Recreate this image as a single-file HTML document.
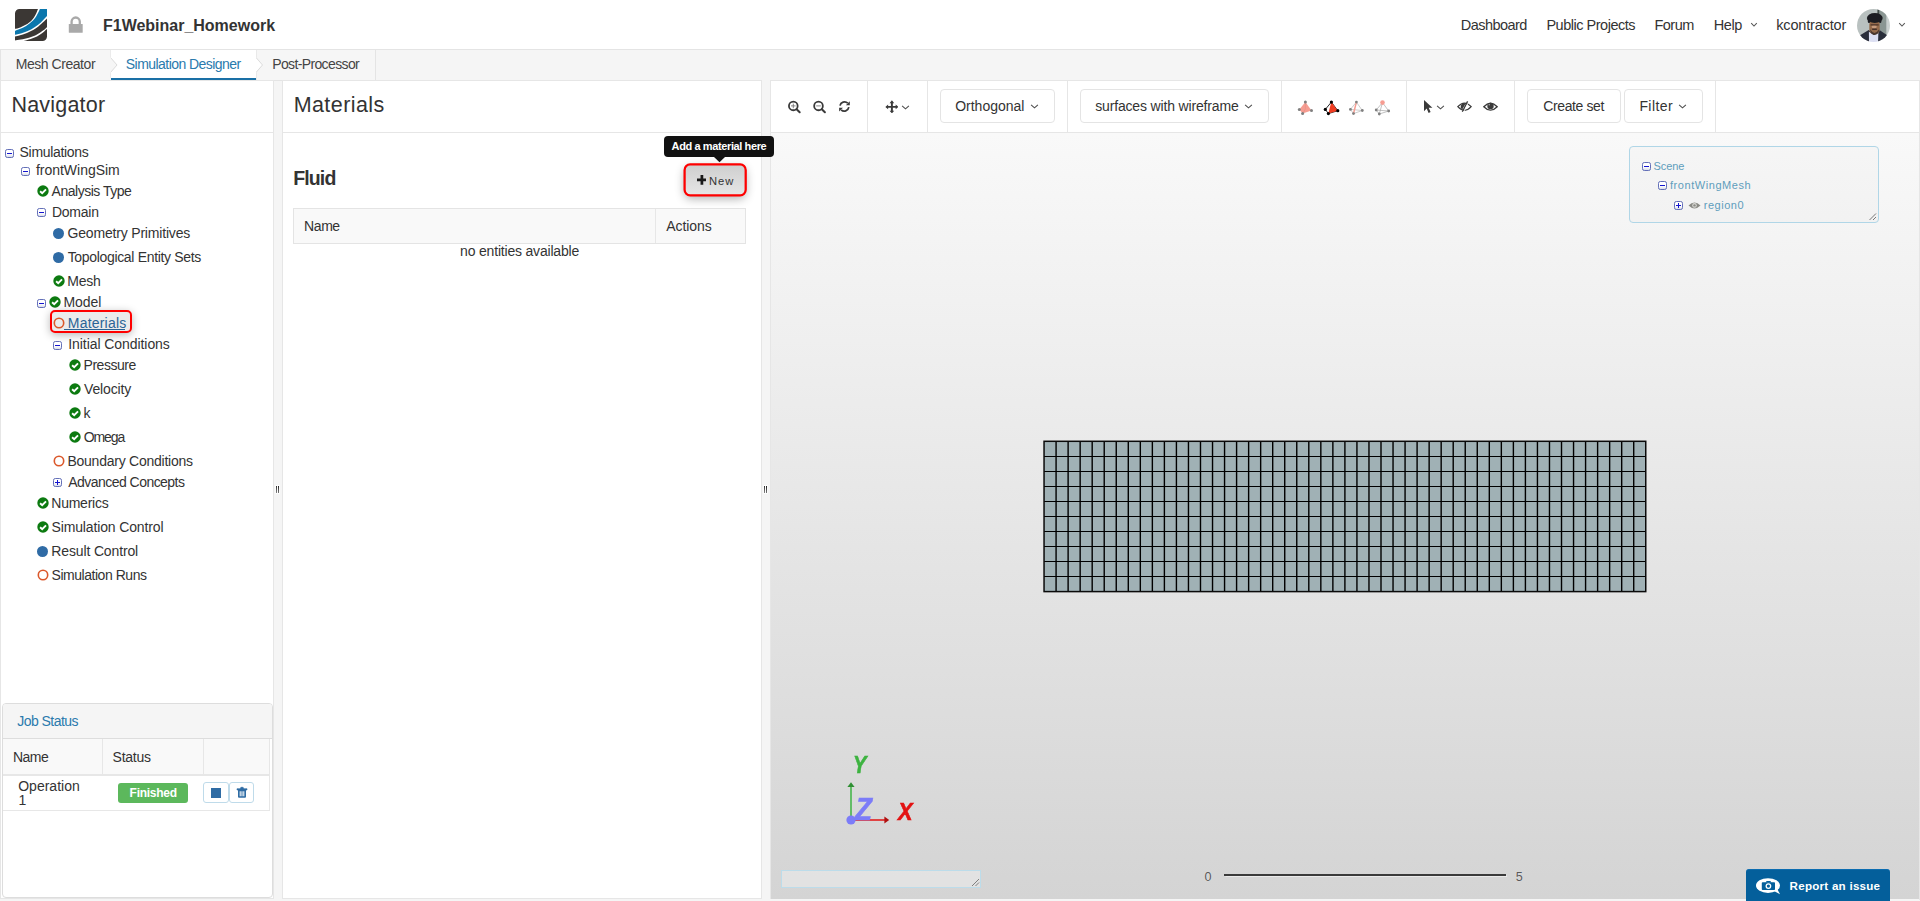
<!DOCTYPE html>
<html lang="en"><head><meta charset="utf-8"><title>F1Webinar_Homework</title>
<style>
*{box-sizing:border-box;margin:0;padding:0}
html,body{width:1920px;height:901px;overflow:hidden;background:#f5f5f5;font-family:"Liberation Sans",sans-serif;color:#333}
.t{position:absolute;white-space:pre;font-family:"Liberation Sans",sans-serif;z-index:5}
.a{position:absolute}
#hdr{left:0;top:0;width:1920px;height:50px;background:#fff;border-bottom:1px solid #e4e4e4}
#tabs{left:0;top:50px;width:376px;height:31px;background:#f6f6f6;border-left:1px solid #e4e4e4;border-right:1px solid #e4e4e4;border-bottom:1px solid #e4e4e4}
#tabact{left:111px;top:50px;width:145px;height:30px;background:#fff;border-bottom:2px solid #1a70a6}
.panel{background:#fff;border:1px solid #e6e6e6}
#nav{left:0;top:80px;width:274px;height:819px}
#mat{left:282px;top:80px;width:480px;height:819px}
#view{left:770px;top:80px;width:1150px;height:819px;border:0;border-left:1px solid #e6e6e6;border-top:1px solid #e6e6e6;background:linear-gradient(#f9f9f9 0,#f9f9f9 53px,#d4d4d4 100%)}
#tbar{left:771px;top:81px;width:1149px;height:52px;background:#fff;border-bottom:1px solid #e6e6e6}
.hline{height:1px;background:#e6e6e6}
.vsep{width:1px;top:81px;height:51px;background:#e6e6e6}
.btn{border:1px solid #e4e4e4;border-radius:4px;background:#fff}

</style></head>
<body>
<div class="a" id="hdr"></div>
<div class="a" id="tabs"></div>
<div class="a" id="tabact"></div>
<div class="a panel" id="nav"></div>
<div class="a hline" style="left:1px;top:132px;width:272px"></div>
<div class="a panel" id="mat"></div>
<div class="a hline" style="left:283px;top:132px;width:478px"></div>
<div class="a" id="view"></div>
<div class="a" id="tbar"></div>
<div class="a" style="left:1919px;top:80px;width:1px;height:820px;background:#e6e6e6"></div>
<svg width="0" height="0" style="position:absolute">
<defs>
<linearGradient id="g-box" x1="0" y1="0" x2="0" y2="1"><stop offset="0" stop-color="#fff"/><stop offset=".55" stop-color="#fff"/><stop offset="1" stop-color="#d4d8e4"/></linearGradient>
</defs></svg>
<!-- logo -->
<svg class="a" style="left:15px;top:9px" width="32" height="32" viewBox="0 0 32 32">
<defs><clipPath id="lg"><path d="M4.5 0H32V27.5a4.5 4.5 0 0 1-4.5 4.5H0V4.5A4.5 4.5 0 0 1 4.5 0Z"/></clipPath></defs>
<g clip-path="url(#lg)"><rect width="32" height="32" fill="#3b3734"/><path d="M23 0C22.57 1.00 21.43 4.13 20.40 6.00C19.37 7.87 18.33 9.60 16.80 11.20C15.27 12.80 13.13 14.40 11.20 15.60C9.27 16.80 7.07 17.70 5.20 18.40C3.33 19.10 0.87 19.57 0.00 19.80L0 27.4C1.00 27.17 3.67 26.73 6.00 26.00C8.33 25.27 11.33 24.27 14.00 23.00C16.67 21.73 19.67 20.03 22.00 18.40C24.33 16.77 26.33 14.70 28.00 13.20C29.67 11.70 31.33 10.03 32.00 9.40L32 0Z" fill="#fff"/><path d="M24.9 0C24.37 1.08 22.90 4.53 21.70 6.50C20.50 8.47 19.47 10.07 17.70 11.80C15.93 13.53 13.25 15.52 11.10 16.90C8.95 18.28 6.65 19.27 4.80 20.10C2.95 20.93 0.80 21.60 0.00 21.90L0 25.8C1.33 25.47 5.33 24.70 8.00 23.80C10.67 22.90 13.53 21.70 16.00 20.40C18.47 19.10 20.80 17.53 22.80 16.00C24.80 14.47 26.47 12.70 28.00 11.20C29.53 9.70 31.33 7.70 32.00 7.00L32 0Z" fill="#0b77ad"/><path d="M32 18.2C31.33 18.77 29.67 20.37 28.00 21.60C26.33 22.83 24.33 24.40 22.00 25.60C19.67 26.80 16.67 27.97 14.00 28.80C11.33 29.63 8.33 30.15 6.00 30.60C3.67 31.05 1.00 31.35 0.00 31.50L0 32L8.4 32C9.60 31.65 13.33 30.67 15.60 29.90C17.87 29.13 19.93 28.47 22.00 27.40C24.07 26.33 26.33 24.77 28.00 23.50C29.67 22.23 31.33 20.42 32.00 19.80Z" fill="#fff"/></g></svg>
<!-- lock -->
<svg class="a" style="left:68px;top:15px" width="16" height="19" viewBox="0 0 16 19">
<path d="M3.6 10V6.6a4.1 4.1 0 0 1 8.2 0V10" fill="none" stroke="#a9a9a9" stroke-width="2.3"/>
<rect x=".8" y="9" width="13.9" height="8.8" rx=".6" fill="#a9a9a9"/></svg>
<!-- avatar -->
<svg class="a" style="left:1857px;top:9px" width="33" height="33" viewBox="0 0 33 33">
<defs><clipPath id="av"><circle cx="16.5" cy="16.5" r="16.5"/></clipPath><filter id="avb" x="-10%" y="-10%" width="120%" height="120%"><feGaussianBlur stdDeviation=".6"/></filter></defs>
<g clip-path="url(#av)"><g filter="url(#avb)">
<rect x="-2" y="-2" width="37" height="37" fill="#b9c1c0"/>
<rect x="21" y="-2" width="8.5" height="37" fill="#8a9693"/>
<rect x="20.4" y="-2" width="1.8" height="12" fill="#414947"/>
<rect x="29.5" y="-2" width="6" height="37" fill="#c9d0cf"/>
<path d="M1 27.5 L11.7 21 L16.5 24 L22.8 21.3 L32 27.5 V35 H1 Z" fill="#2a2d3a"/>
<path d="M11.9 22.8 L16.8 26 L21.4 23 L21 35 H12 Z" fill="#dcdff2"/>
<rect x="12.3" y="11" width="10.4" height="14.3" rx="4.6" fill="#946a4b"/>
<ellipse cx="17.2" cy="17.8" rx="2.6" ry="1.7" fill="#c79b7d"/>
<rect x="13.4" y="15.2" width="8.4" height="1.3" rx=".6" fill="#4b3528"/>
<path d="M13 20.3 Q17.4 27.5 22.3 20.3 Q21.5 25.8 17.5 26 Q13.8 25.8 13 20.3Z" fill="#4a372e"/>
<rect x="15" y="19.6" width="5" height="1.4" rx=".7" fill="#45302a"/>
<ellipse cx="17.8" cy="9" rx="7.9" ry="5.1" fill="#1e1e22"/>
<rect x="10.8" y="9" width="2.4" height="5" rx="1.2" fill="#1e1e22"/><rect x="22" y="9" width="2.4" height="5" rx="1.2" fill="#1e1e22"/>
</g></g></svg>
<!-- chevrons header -->
<svg class="a" style="left:1750px;top:22.3px" width="8" height="6" viewBox="0 0 8 6"><path d="M1.2 1.2 L4 4 L6.8 1.2" fill="none" stroke="#555" stroke-width="1.05"/></svg>
<svg class="a" style="left:1898px;top:22.3px" width="8" height="6" viewBox="0 0 8 6"><path d="M1.2 1.2 L4 4 L6.8 1.2" fill="none" stroke="#555" stroke-width="1.05"/></svg>
<!-- tab arrows -->
<svg class="a" style="left:108px;top:50px" width="12" height="30" viewBox="0 0 12 30"><path d="M2.5 0 V7.5 L9 15 L2.5 22.5 V28" fill="#f6f6f6" stroke="#dcdcdc" stroke-width="1"/><rect x="0" y="0" width="2.6" height="28" fill="#f6f6f6"/></svg>
<svg class="a" style="left:253px;top:50px" width="12" height="30" viewBox="0 0 12 30"><path d="M3 0 V7.5 L9.5 15 L3 22.5 V30" fill="#fff" stroke="#dcdcdc" stroke-width="1"/><rect x="0" y="0" width="3" height="28" fill="#fff"/><rect x="0" y="28" width="3" height="2" fill="#1a70a6"/></svg>
<!-- job status -->
<div class="a" style="left:2px;top:703px;width:271px;height:195px;background:#fff;border:1px solid #ddd;border-radius:4px"></div>
<div class="a" style="left:3px;top:704px;width:269px;height:35px;background:#f5f5f5;border-bottom:1px solid #ddd;border-radius:3px 3px 0 0"></div>
<div class="a" style="left:3px;top:739px;width:267px;height:37px;background:#f9f9f9;border-bottom:2px solid #e7e7e7"></div>
<div class="a" style="left:102px;top:739px;width:1px;height:36px;background:#e7e7e7"></div>
<div class="a" style="left:203px;top:739px;width:1px;height:36px;background:#e7e7e7"></div>
<div class="a" style="left:269px;top:739px;width:1px;height:72px;background:#e7e7e7"></div>
<div class="a" style="left:3px;top:810px;width:267px;height:1px;background:#e7e7e7"></div>
<div class="a" style="left:118px;top:783px;width:70px;height:20px;background:#5cb85c;border-radius:3px"></div>
<div class="a" style="left:203px;top:782px;width:26px;height:21px;border:1px solid #bfdbea;border-radius:3px;background:#fff"></div>
<div class="a" style="left:211px;top:788px;width:10px;height:10px;background:#2f6ca4"></div>
<div class="a" style="left:229px;top:782px;width:25px;height:21px;border:1px solid #bfdbea;border-radius:3px;background:#fff"></div>
<svg class="a" style="left:236px;top:786px" width="12" height="13" viewBox="0 0 12 13"><path d="M1 2.7H11V4H1Z M4.3 2.7 L4.9 1.3 H7.1 L7.7 2.7" fill="#2f6ca4" stroke="#2f6ca4" stroke-width=".6"/><path d="M2 4H10V10.8a1 1 0 0 1-1 1H3a1 1 0 0 1-1-1Z M3.7 5.2V10.3H4.7V5.2Z M5.5 5.2V10.3H6.5V5.2Z M7.3 5.2V10.3H8.3V5.2Z" fill="#2f6ca4" fill-rule="evenodd"/></svg>
<!-- splitter handles -->
<div class="a" style="left:276px;top:486px;width:1px;height:7px;background:linear-gradient(#222,#777);box-shadow:0 0 1px 1px rgba(255,255,255,.8)"></div><div class="a" style="left:278px;top:486px;width:1px;height:7px;background:linear-gradient(#222,#777);box-shadow:0 0 1px 1px rgba(255,255,255,.8)"></div><div class="a" style="left:764px;top:486px;width:1px;height:7px;background:linear-gradient(#222,#777);box-shadow:0 0 1px 1px rgba(255,255,255,.8)"></div><div class="a" style="left:766px;top:486px;width:1px;height:7px;background:linear-gradient(#222,#777);box-shadow:0 0 1px 1px rgba(255,255,255,.8)"></div>
<!-- materials -->
<div class="a" style="left:293px;top:208px;width:453px;height:36px;background:#f9f9f9;border:1px solid #e4e4e4"></div>
<div class="a" style="left:655px;top:209px;width:1px;height:34px;background:#e7e7e7"></div>
<div class="a" style="left:685px;top:165px;width:60px;height:30px;border-radius:6px;box-shadow:0 3px 10px 1px rgba(0,0,0,.3)"></div><svg class="a" style="left:682px;top:162px" width="67" height="36" viewBox="682 162 67 36"><defs><linearGradient id="g-new" x1="0" y1="0" x2="0" y2="1"><stop offset="0" stop-color="#cecece"/><stop offset="1" stop-color="#e6e6e6"/></linearGradient></defs><rect x="684.6" y="164.4" width="61.1" height="30.9" rx="5.5" fill="url(#g-new)" stroke="#fe0000" stroke-width="2.25"/></svg>
<svg class="a" style="left:696.7px;top:175.2px" width="9.8" height="9.8" viewBox="0 0 10 10"><path d="M3.6 0H6.4V3.7H10V6.3H6.4V10H3.6V6.3H0V3.7H3.6Z" fill="#1a1a1a"/></svg>
<div class="a" style="left:664px;top:136px;width:110px;height:21px;background:#111;border-radius:4px;z-index:8"></div>
<svg class="a" style="left:714px;top:157px;z-index:8" width="11" height="6" viewBox="0 0 11 6"><path d="M0 0H11L5.5 5.2Z" fill="#111"/></svg>
<!-- toolbar -->
<div class="a vsep" style="left:867px"></div><div class="a vsep" style="left:927px"></div><div class="a vsep" style="left:1067px"></div><div class="a vsep" style="left:1281px"></div><div class="a vsep" style="left:1406px"></div><div class="a vsep" style="left:1514px"></div><div class="a vsep" style="left:1715px"></div>
<div class="a btn" style="left:940px;top:89px;width:115px;height:34px"></div>
<div class="a btn" style="left:1080px;top:89px;width:189px;height:34px"></div>
<div class="a btn" style="left:1527px;top:89px;width:94px;height:34px"></div>
<div class="a btn" style="left:1624px;top:89px;width:79px;height:34px"></div>
<svg class="a" style="left:1030px;top:103px" width="9" height="7" viewBox="0 0 9 7"><path d="M1.1 1.8 L4.5 4.8 L7.9 1.8" fill="none" stroke="#4a4a4a" stroke-width="1.05"/></svg>
<svg class="a" style="left:1244px;top:103px" width="9" height="7" viewBox="0 0 9 7"><path d="M1.1 1.8 L4.5 4.8 L7.9 1.8" fill="none" stroke="#4a4a4a" stroke-width="1.05"/></svg>
<svg class="a" style="left:1678px;top:103px" width="9" height="7" viewBox="0 0 9 7"><path d="M1.1 1.8 L4.5 4.8 L7.9 1.8" fill="none" stroke="#4a4a4a" stroke-width="1.05"/></svg>
<svg class="a" style="left:901px;top:103.5px" width="9" height="7" viewBox="0 0 9 7"><path d="M1.1 1.8 L4.5 4.8 L7.9 1.8" fill="none" stroke="#4a4a4a" stroke-width="1.05"/></svg>
<svg class="a" style="left:1436px;top:103.5px" width="9" height="7" viewBox="0 0 9 7"><path d="M1.1 1.8 L4.5 4.8 L7.9 1.8" fill="none" stroke="#4a4a4a" stroke-width="1.05"/></svg>
<!-- zoom in / out / refresh / move -->
<svg class="a" style="left:786px;top:99px" width="16" height="16" viewBox="0 0 16 16"><circle cx="7.3" cy="6.9" r="4.35" fill="none" stroke="#3a3a3a" stroke-width="1.8"/><path d="M10.6 10.2 L13.7 13.3" stroke="#3a3a3a" stroke-width="2" stroke-linecap="round"/><path d="M5 6.9H9.6M7.3 4.6V9.2" stroke="#777" stroke-width=".9"/></svg>
<svg class="a" style="left:811px;top:99px" width="16" height="16" viewBox="0 0 16 16"><circle cx="7.5" cy="6.9" r="4.35" fill="none" stroke="#3a3a3a" stroke-width="1.8"/><path d="M10.8 10.2 L13.9 13.3" stroke="#3a3a3a" stroke-width="2" stroke-linecap="round"/><path d="M5.2 6.9H9.8" stroke="#777" stroke-width=".9"/></svg>
<svg class="a" style="left:837.7px;top:100px" width="12.9" height="12.9" viewBox="0 0 14 14"><path d="M2.2 6.2A5 5 0 0 1 10.6 3.4" fill="none" stroke="#3a3a3a" stroke-width="1.9"/><path d="M12.8 1.4V5.6H8.6Z" fill="#3a3a3a"/><path d="M11.8 7.8A5 5 0 0 1 3.4 10.6" fill="none" stroke="#3a3a3a" stroke-width="1.9"/><path d="M1.2 12.6V8.4H5.4Z" fill="#3a3a3a"/></svg>
<svg class="a" style="left:884.6px;top:99.6px" width="13.8" height="13.8" viewBox="0 0 15 15"><path d="M7.5 2V13M2 7.5H13" stroke="#3a3a3a" stroke-width="2.1"/><path d="M7.5 .4L10 3.4H5Z M7.5 14.6L10 11.6H5Z M.4 7.5L3.4 5V10Z M14.6 7.5L11.6 5V10Z" fill="#3a3a3a"/></svg>
<!-- tetra icons -->
<svg class="a" style="left:1296px;top:98px" width="96" height="19" viewBox="1296 98 96 19">
<g><path d="M1305.4 102.1 L1299.3 109.4 L1302.6 113.6 L1311.5 110.5Z" fill="#f69d92"/><path d="M1305.4 102.1V109 L1302.6 113.6" fill="none" stroke="#e08a80" stroke-width=".5"/>
<g fill="#808080"><circle cx="1305.4" cy="102.1" r="1.5"/><circle cx="1299.3" cy="109.4" r="1.5"/><circle cx="1302.6" cy="113.6" r="1.5"/><circle cx="1311.5" cy="110.5" r="1.5"/></g></g>
<g><path d="M1331.4 102.1 L1325.3 109.4 L1328.4 113.6 L1337.8 110.7Z" fill="#fff" stroke="#111" stroke-width=".9"/><path d="M1331.4 102.1 L1337.8 110.7 L1328.4 113.6 L1330 107Z" fill="#f03c20"/>
<g fill="#000"><circle cx="1331.4" cy="102.1" r="1.6"/><circle cx="1325.3" cy="109.4" r="1.6"/><circle cx="1328.4" cy="113.6" r="1.6"/><circle cx="1337.8" cy="110.7" r="1.6"/></g></g>
<g><path d="M1356.4 102.1 L1350.4 109.4 L1353.5 113.6 L1362.3 110.5Z M1350.4 109.4 L1362.3 110.5" fill="none" stroke="#aaa" stroke-width=".6"/><path d="M1356.4 102.1 L1353.5 113.6" stroke="#f69d92" stroke-width="1.5"/>
<g fill="#808080"><circle cx="1356.4" cy="102.1" r="1.4"/><circle cx="1350.4" cy="109.4" r="1.4"/><circle cx="1353.5" cy="113.6" r="1.4"/><circle cx="1362.3" cy="110.5" r="1.4"/></g></g>
<g><path d="M1382.5 102.6 L1376.2 110 L1379.3 114 L1388.7 111Z M1376.2 110 L1388.7 111 M1382.5 102.6 L1379.3 114" fill="none" stroke="#999" stroke-width=".6"/>
<circle cx="1382.5" cy="102.6" r="2.3" fill="#f69d92"/>
<g fill="#808080"><circle cx="1376.2" cy="110" r="1.4"/><circle cx="1379.3" cy="114" r="1.4"/><circle cx="1388.7" cy="111" r="1.4"/></g></g>
</svg>
<!-- cursor, eye-slash, eye -->
<svg class="a" style="left:1423px;top:99px" width="11" height="15" viewBox="0 0 11 15"><path d="M1 1V12.2L3.7 9.6L5.6 13.9L7.6 13L5.7 8.8H9.4Z" fill="#3a3a3a"/></svg>
<svg class="a" style="left:1457px;top:101px" width="15" height="12" viewBox="0 0 15 12"><path d="M.8 5.7Q7.5-1.6 14.2 5.7Q7.5 13 .8 5.7Z" fill="none" stroke="#3a3a3a" stroke-width="1.2"/><path d="M7.4 2.2A3.5 3.5 0 0 0 5.2 8.6L8.6 2.4Z" fill="#3a3a3a"/><path d="M10.6 .4 L5.4 10.8" stroke="#3a3a3a" stroke-width="1.4"/><path d="M10.6 .4 L5.4 10.8" stroke="#fff" stroke-width=".8" transform="translate(1.2 .3)"/></svg>
<svg class="a" style="left:1483px;top:101px" width="15" height="12" viewBox="0 0 15 12"><path d="M.8 5.7Q7.5-1.2 14.2 5.7Q7.5 12.6 .8 5.7Z" fill="none" stroke="#3a3a3a" stroke-width="1.3"/><circle cx="7.5" cy="4.9" r="3.2" fill="#3a3a3a"/><circle cx="6.2" cy="3.8" r=".7" fill="#bbb"/></svg>
<!-- scene box -->
<div class="a" style="left:1629px;top:146px;width:250px;height:77px;border:1px solid #b0d6e7;border-radius:4px;background:rgba(0,0,0,.012)"></div>
<svg class="a" style="left:1868px;top:212px" width="9" height="9" viewBox="0 0 9 9"><path d="M1.5 8L8 1.5M5 8L8 5" stroke="#555" stroke-width=".8"/></svg>
<svg class="a" style="left:1688px;top:201px" width="13" height="9" viewBox="0 0 13 9"><path d="M.5 4.5Q6.5-1.3 12.5 4.5Q6.5 10.3 .5 4.5Z" fill="#8a8a84"/><circle cx="6.5" cy="4.4" r="2.3" fill="#d8d8d4"/><circle cx="6.5" cy="4.4" r="1.2" fill="#8a8a84"/></svg>
<!-- axes -->
<svg class="a" style="left:840px;top:778px" width="56" height="52" viewBox="840 778 56 52">
<path d="M851 820V786" stroke="#3db340" stroke-width="1.5"/><path d="M851 782.2L854.6 787H847.4Z" fill="#2f8f33"/>
<path d="M851 820H885" stroke="#e31212" stroke-width="1.5"/><path d="M889.2 820L884.4 823.6V816.4Z" fill="#b01010"/>
<circle cx="851" cy="820" r="4.6" fill="#7c7cf8"/></svg>
<!-- bottom textarea -->
<div class="a" style="left:781px;top:870px;width:200px;height:18px;border:1px solid #bcdcea;background:rgba(255,255,255,.32)"></div>
<svg class="a" style="left:971px;top:878px" width="9" height="9" viewBox="0 0 9 9"><path d="M1 8L8 1M4.5 8L8 4.5" stroke="#666" stroke-width=".8"/></svg>
<!-- scale bar -->
<div class="a" style="left:1224px;top:874px;width:282px;height:2px;background:#3a3a3a;box-shadow:0 0 1px 0.5px rgba(255,255,255,.5)"></div>
<!-- report -->
<div class="a" style="left:1746px;top:869px;width:144px;height:33px;background:#045f9b;border-radius:3px 3px 0 0;border-top:1px solid #0b6cb0"></div>
<svg class="a" style="left:1754px;top:876px" width="28" height="20" viewBox="1754 876 28 20"><ellipse cx="1768" cy="885.6" rx="12" ry="7.4" fill="#fff"/><path d="M1773 890.5L1780 894.2L1776.5 887.5Z" fill="#fff"/><rect x="1761.8" y="882.3" width="13.2" height="7.8" rx=".8" fill="#045f9b"/><path d="M1765.6 882.6L1766.6 880.9H1770.4L1771.4 882.6Z" fill="#045f9b"/><circle cx="1768.4" cy="886.1" r="2.9" fill="#fff"/><circle cx="1768.4" cy="886.1" r="1.6" fill="#045f9b"/></svg>
<svg class="a" style="left:5px;top:149px" width="9" height="9" viewBox="0 0 9 9"><rect x=".5" y=".5" width="8" height="8" rx="1.8" fill="url(#g-box)" stroke="#6470b8"/><rect x="2" y="4" width="5" height="1" fill="#1515d0"/></svg>
<svg class="a" style="left:21px;top:167px" width="9" height="9" viewBox="0 0 9 9"><rect x=".5" y=".5" width="8" height="8" rx="1.8" fill="url(#g-box)" stroke="#6470b8"/><rect x="2" y="4" width="5" height="1" fill="#1515d0"/></svg>
<svg class="a" style="left:36.7px;top:185.3px" width="12" height="12" viewBox="0 0 12 12"><circle cx="6" cy="6" r="5.7" fill="#0c7a10"/><path d="M3.1 6.2 L5.2 8.2 L9 4.3" fill="none" stroke="#fff" stroke-width="1.9"/></svg>
<svg class="a" style="left:37px;top:208px" width="9" height="9" viewBox="0 0 9 9"><rect x=".5" y=".5" width="8" height="8" rx="1.8" fill="url(#g-box)" stroke="#6470b8"/><rect x="2" y="4" width="5" height="1" fill="#1515d0"/></svg>
<div class="a" style="left:53.0px;top:227.8px;width:11px;height:11px;border-radius:50%;background:#2f6ba5"></div>
<div class="a" style="left:53.0px;top:251.8px;width:11px;height:11px;border-radius:50%;background:#2f6ba5"></div>
<svg class="a" style="left:52.7px;top:275.3px" width="12" height="12" viewBox="0 0 12 12"><circle cx="6" cy="6" r="5.7" fill="#0c7a10"/><path d="M3.1 6.2 L5.2 8.2 L9 4.3" fill="none" stroke="#fff" stroke-width="1.9"/></svg>
<svg class="a" style="left:37px;top:299px" width="9" height="9" viewBox="0 0 9 9"><rect x=".5" y=".5" width="8" height="8" rx="1.8" fill="url(#g-box)" stroke="#6470b8"/><rect x="2" y="4" width="5" height="1" fill="#1515d0"/></svg>
<svg class="a" style="left:48.7px;top:296.4px" width="12" height="12" viewBox="0 0 12 12"><circle cx="6" cy="6" r="5.7" fill="#0c7a10"/><path d="M3.1 6.2 L5.2 8.2 L9 4.3" fill="none" stroke="#fff" stroke-width="1.9"/></svg>
<div class="a" style="left:50px;top:310px;width:82px;height:23px;border:2px solid #f00;border-radius:5px;background:#ebebeb;box-shadow:0 2px 8px rgba(0,0,0,.28)"></div>
<svg class="a" style="left:52.6px;top:317.3px" width="12" height="12" viewBox="0 0 12 12"><circle cx="6" cy="6" r="4.7" fill="none" stroke="#db582b" stroke-width="1.6"/></svg>
<svg class="a" style="left:53px;top:341px" width="9" height="9" viewBox="0 0 9 9"><rect x=".5" y=".5" width="8" height="8" rx="1.8" fill="url(#g-box)" stroke="#6470b8"/><rect x="2" y="4" width="5" height="1" fill="#1515d0"/></svg>
<svg class="a" style="left:68.7px;top:359.3px" width="12" height="12" viewBox="0 0 12 12"><circle cx="6" cy="6" r="5.7" fill="#0c7a10"/><path d="M3.1 6.2 L5.2 8.2 L9 4.3" fill="none" stroke="#fff" stroke-width="1.9"/></svg>
<svg class="a" style="left:68.7px;top:383.3px" width="12" height="12" viewBox="0 0 12 12"><circle cx="6" cy="6" r="5.7" fill="#0c7a10"/><path d="M3.1 6.2 L5.2 8.2 L9 4.3" fill="none" stroke="#fff" stroke-width="1.9"/></svg>
<svg class="a" style="left:68.7px;top:407.3px" width="12" height="12" viewBox="0 0 12 12"><circle cx="6" cy="6" r="5.7" fill="#0c7a10"/><path d="M3.1 6.2 L5.2 8.2 L9 4.3" fill="none" stroke="#fff" stroke-width="1.9"/></svg>
<svg class="a" style="left:68.7px;top:431.3px" width="12" height="12" viewBox="0 0 12 12"><circle cx="6" cy="6" r="5.7" fill="#0c7a10"/><path d="M3.1 6.2 L5.2 8.2 L9 4.3" fill="none" stroke="#fff" stroke-width="1.9"/></svg>
<svg class="a" style="left:52.5px;top:455.3px" width="12" height="12" viewBox="0 0 12 12"><circle cx="6" cy="6" r="4.7" fill="none" stroke="#db582b" stroke-width="1.6"/></svg>
<svg class="a" style="left:53px;top:478px" width="9" height="9" viewBox="0 0 9 9"><rect x=".5" y=".5" width="8" height="8" rx="1.8" fill="url(#g-box)" stroke="#6470b8"/><rect x="2" y="4" width="5" height="1" fill="#1515d0"/><rect x="4" y="2" width="1" height="5" fill="#1515d0"/></svg>
<svg class="a" style="left:36.7px;top:497.3px" width="12" height="12" viewBox="0 0 12 12"><circle cx="6" cy="6" r="5.7" fill="#0c7a10"/><path d="M3.1 6.2 L5.2 8.2 L9 4.3" fill="none" stroke="#fff" stroke-width="1.9"/></svg>
<svg class="a" style="left:36.7px;top:521.3px" width="12" height="12" viewBox="0 0 12 12"><circle cx="6" cy="6" r="5.7" fill="#0c7a10"/><path d="M3.1 6.2 L5.2 8.2 L9 4.3" fill="none" stroke="#fff" stroke-width="1.9"/></svg>
<div class="a" style="left:37.0px;top:545.8px;width:11px;height:11px;border-radius:50%;background:#2f6ba5"></div>
<svg class="a" style="left:36.5px;top:569.3px" width="12" height="12" viewBox="0 0 12 12"><circle cx="6" cy="6" r="4.7" fill="none" stroke="#db582b" stroke-width="1.6"/></svg>
<svg class="a" style="left:1040px;top:437px" width="610" height="159" viewBox="1040 437 610 159"><rect x="1044.05" y="441.3" width="601.70" height="150.30" fill="#a0b1b5"/><path d="M1056.08 441.3V591.6M1068.12 441.3V591.6M1080.15 441.3V591.6M1092.19 441.3V591.6M1104.22 441.3V591.6M1116.25 441.3V591.6M1128.29 441.3V591.6M1140.32 441.3V591.6M1152.36 441.3V591.6M1164.39 441.3V591.6M1176.42 441.3V591.6M1188.46 441.3V591.6M1200.49 441.3V591.6M1212.53 441.3V591.6M1224.56 441.3V591.6M1236.59 441.3V591.6M1248.63 441.3V591.6M1260.66 441.3V591.6M1272.70 441.3V591.6M1284.73 441.3V591.6M1296.76 441.3V591.6M1308.80 441.3V591.6M1320.83 441.3V591.6M1332.87 441.3V591.6M1344.90 441.3V591.6M1356.93 441.3V591.6M1368.97 441.3V591.6M1381.00 441.3V591.6M1393.04 441.3V591.6M1405.07 441.3V591.6M1417.10 441.3V591.6M1429.14 441.3V591.6M1441.17 441.3V591.6M1453.21 441.3V591.6M1465.24 441.3V591.6M1477.27 441.3V591.6M1489.31 441.3V591.6M1501.34 441.3V591.6M1513.38 441.3V591.6M1525.41 441.3V591.6M1537.44 441.3V591.6M1549.48 441.3V591.6M1561.51 441.3V591.6M1573.55 441.3V591.6M1585.58 441.3V591.6M1597.61 441.3V591.6M1609.65 441.3V591.6M1621.68 441.3V591.6M1633.72 441.3V591.6" fill="none" stroke="#000" stroke-width="1.4"/><path d="M1044.05 456.50H1645.75M1044.05 471.50H1645.75M1044.05 486.50H1645.75M1044.05 501.50H1645.75M1044.05 516.50H1645.75M1044.05 531.50H1645.75M1044.05 546.50H1645.75M1044.05 561.50H1645.75M1044.05 576.50H1645.75" fill="none" stroke="#000" stroke-width="1.15"/><rect x="1044.05" y="441.3" width="601.70" height="150.30" fill="none" stroke="#0a0a0a" stroke-width="1.5"/></svg>
<svg class="a" style="left:1642px;top:161.5px" width="9" height="9" viewBox="0 0 9 9"><rect x=".5" y=".5" width="8" height="8" rx="1.8" fill="url(#g-box)" stroke="#6470b8"/><rect x="2" y="4" width="5" height="1" fill="#1515d0"/></svg>
<svg class="a" style="left:1658px;top:181px" width="9" height="9" viewBox="0 0 9 9"><rect x=".5" y=".5" width="8" height="8" rx="1.8" fill="url(#g-box)" stroke="#6470b8"/><rect x="2" y="4" width="5" height="1" fill="#1515d0"/></svg>
<svg class="a" style="left:1674px;top:201px" width="9" height="9" viewBox="0 0 9 9"><rect x=".5" y=".5" width="8" height="8" rx="1.8" fill="url(#g-box)" stroke="#6470b8"/><rect x="2" y="4" width="5" height="1" fill="#1515d0"/><rect x="4" y="2" width="1" height="5" fill="#1515d0"/></svg>
<div class="a" style="left:64px;top:329.3px;width:61px;height:1px;background:#2a6496;z-index:6"></div>
<span class="t" style="left:103.0px;top:15.2px;font-size:16px;line-height:21px;color:#333;font-weight:700;letter-spacing:-0.01px;">F1Webinar_Homework</span>
<span class="t" style="left:1460.7px;top:16.2px;font-size:14.5px;line-height:19px;color:#333;letter-spacing:-0.53px;">Dashboard</span>
<span class="t" style="left:1546.4px;top:16.2px;font-size:14.5px;line-height:19px;color:#333;letter-spacing:-0.48px;">Public Projects</span>
<span class="t" style="left:1654.4px;top:16.2px;font-size:14.5px;line-height:19px;color:#333;letter-spacing:-0.48px;">Forum</span>
<span class="t" style="left:1713.7px;top:16.2px;font-size:14.5px;line-height:19px;color:#333;letter-spacing:-0.38px;">Help</span>
<span class="t" style="left:1776.3px;top:16.2px;font-size:14.5px;line-height:19px;color:#333;letter-spacing:-0.18px;">kcontractor</span>
<span class="t" style="left:15.7px;top:55.0px;font-size:14px;line-height:18px;color:#444;letter-spacing:-0.45px;">Mesh Creator</span>
<span class="t" style="left:125.8px;top:55.0px;font-size:14px;line-height:18px;color:#2a7aad;letter-spacing:-0.55px;">Simulation Designer</span>
<span class="t" style="left:272.2px;top:55.0px;font-size:14px;line-height:18px;color:#444;letter-spacing:-0.63px;">Post-Processor</span>
<span class="t" style="left:11.4px;top:91.2px;font-size:21.5px;line-height:28px;color:#333;letter-spacing:0.21px;">Navigator</span>
<span class="t" style="left:293.7px;top:91.2px;font-size:21.5px;line-height:28px;color:#333;letter-spacing:0.41px;">Materials</span>
<span class="t" style="left:293.3px;top:166.2px;font-size:19.5px;line-height:25px;color:#333;font-weight:700;letter-spacing:-0.89px;">Fluid</span>
<span class="t" style="left:19.6px;top:143.1px;font-size:14px;line-height:18px;color:#333;letter-spacing:-0.32px;">Simulations</span>
<span class="t" style="left:36.0px;top:161.1px;font-size:14px;line-height:18px;color:#333;letter-spacing:-0.03px;">frontWingSim</span>
<span class="t" style="left:51.6px;top:182.1px;font-size:14px;line-height:18px;color:#333;letter-spacing:-0.49px;">Analysis Type</span>
<span class="t" style="left:51.9px;top:203.1px;font-size:14px;line-height:18px;color:#333;letter-spacing:-0.23px;">Domain</span>
<span class="t" style="left:67.5px;top:224.1px;font-size:14px;line-height:18px;color:#333;letter-spacing:-0.18px;">Geometry Primitives</span>
<span class="t" style="left:67.7px;top:248.1px;font-size:14px;line-height:18px;color:#333;letter-spacing:-0.33px;">Topological Entity Sets</span>
<span class="t" style="left:67.3px;top:272.1px;font-size:14px;line-height:18px;color:#333;letter-spacing:-0.25px;">Mesh</span>
<span class="t" style="left:63.4px;top:293.1px;font-size:14px;line-height:18px;color:#333;letter-spacing:-0.02px;">Model</span>
<span class="t" style="left:67.8px;top:314.1px;font-size:14px;line-height:18px;color:#2a6496;letter-spacing:0.20px;">Materials</span>
<span class="t" style="left:68.3px;top:335.1px;font-size:14px;line-height:18px;color:#333;letter-spacing:-0.07px;">Initial Conditions</span>
<span class="t" style="left:83.5px;top:356.1px;font-size:14px;line-height:18px;color:#333;letter-spacing:-0.46px;">Pressure</span>
<span class="t" style="left:84.0px;top:380.1px;font-size:14px;line-height:18px;color:#333;letter-spacing:-0.14px;">Velocity</span>
<span class="t" style="left:83.6px;top:404.1px;font-size:14px;line-height:18px;color:#333;">k</span>
<span class="t" style="left:83.7px;top:428.1px;font-size:14px;line-height:18px;color:#333;letter-spacing:-1.10px;">Omega</span>
<span class="t" style="left:67.4px;top:452.1px;font-size:14px;line-height:18px;color:#333;letter-spacing:-0.24px;">Boundary Conditions</span>
<span class="t" style="left:68.3px;top:473.1px;font-size:14px;line-height:18px;color:#333;letter-spacing:-0.54px;">Advanced Concepts</span>
<span class="t" style="left:51.3px;top:494.1px;font-size:14px;line-height:18px;color:#333;letter-spacing:-0.25px;">Numerics</span>
<span class="t" style="left:51.5px;top:518.0px;font-size:14px;line-height:18px;color:#333;letter-spacing:-0.14px;">Simulation Control</span>
<span class="t" style="left:51.3px;top:542.0px;font-size:14px;line-height:18px;color:#333;letter-spacing:-0.14px;">Result Control</span>
<span class="t" style="left:51.5px;top:566.0px;font-size:14px;line-height:18px;color:#333;letter-spacing:-0.46px;">Simulation Runs</span>
<span class="t" style="left:17.2px;top:712.0px;font-size:14px;line-height:18px;color:#2a7aad;letter-spacing:-0.54px;">Job Status</span>
<span class="t" style="left:12.9px;top:748.0px;font-size:14px;line-height:18px;color:#333;letter-spacing:-0.49px;">Name</span>
<span class="t" style="left:112.6px;top:748.0px;font-size:14px;line-height:18px;color:#333;letter-spacing:-0.28px;">Status</span>
<span class="t" style="left:18.2px;top:777.0px;font-size:14px;line-height:18px;color:#333;letter-spacing:0.01px;">Operation</span>
<span class="t" style="left:18.4px;top:791.0px;font-size:14px;line-height:18px;color:#333;">1</span>
<span class="t" style="left:129.6px;top:784.5px;font-size:12px;line-height:16px;color:#fff;font-weight:700;letter-spacing:-0.27px;">Finished</span>
<span class="t" style="left:709.1px;top:173.7px;font-size:11.2px;line-height:15px;color:#333;letter-spacing:0.93px;">New</span>
<span class="t" style="left:304.1px;top:217.1px;font-size:14px;line-height:18px;color:#333;letter-spacing:-0.43px;">Name</span>
<span class="t" style="left:666.2px;top:217.1px;font-size:14px;line-height:18px;color:#333;letter-spacing:-0.07px;">Actions</span>
<span class="t" style="left:460.1px;top:242.1px;font-size:14px;line-height:18px;color:#333;letter-spacing:-0.19px;">no entities available</span>
<span class="t" style="left:671.6px;top:138.9px;font-size:11px;line-height:14px;color:#fff;font-weight:700;letter-spacing:-0.39px;z-index:9;">Add a material here</span>
<span class="t" style="left:955.2px;top:97.0px;font-size:14px;line-height:18px;color:#333;letter-spacing:-0.01px;">Orthogonal</span>
<span class="t" style="left:1095.2px;top:97.0px;font-size:14px;line-height:18px;color:#333;letter-spacing:-0.16px;">surfaces with wireframe</span>
<span class="t" style="left:1543.3px;top:97.0px;font-size:14px;line-height:18px;color:#333;letter-spacing:-0.40px;">Create set</span>
<span class="t" style="left:1639.4px;top:97.0px;font-size:14px;line-height:18px;color:#333;letter-spacing:0.43px;">Filter</span>
<span class="t" style="left:1653.6px;top:158.6px;font-size:11px;line-height:14px;color:#5e9dbc;letter-spacing:-0.08px;">Scene</span>
<span class="t" style="left:1670.0px;top:177.6px;font-size:11px;line-height:14px;color:#5e9dbc;letter-spacing:0.56px;">frontWingMesh</span>
<span class="t" style="left:1703.7px;top:197.6px;font-size:11px;line-height:14px;color:#5e9dbc;letter-spacing:0.54px;">region0</span>
<span class="t" style="left:853.0px;top:749.2px;font-size:24px;line-height:31px;color:#3db340;font-weight:700;-webkit-text-stroke:.6px #3db340;font-style:italic;display:inline-block;transform:scaleX(.84);transform-origin:0 50%;">Y</span>
<span class="t" style="left:854.6px;top:789.8px;font-size:31px;line-height:40px;color:#7c7cf8;font-weight:700;-webkit-text-stroke:.6px #7c7cf8;font-style:italic;display:inline-block;transform:scaleX(.9);transform-origin:0 50%;">Z</span>
<span class="t" style="left:898.0px;top:796.0px;font-size:24px;line-height:31px;color:#e31212;font-weight:700;-webkit-text-stroke:.6px #e31212;font-style:italic;display:inline-block;transform:scaleX(.91);transform-origin:0 50%;">X</span>
<span class="t" style="left:1204.4px;top:868.5px;font-size:12.6px;line-height:16px;color:#585858;text-shadow:0 0 1px rgba(255,255,255,.6);">0</span>
<span class="t" style="left:1515.8px;top:868.5px;font-size:12.6px;line-height:16px;color:#585858;text-shadow:0 0 1px rgba(255,255,255,.6);">5</span>
<span class="t" style="left:1789.6px;top:878.0px;font-size:11.6px;line-height:15px;color:#fff;font-weight:700;letter-spacing:0.25px;">Report an issue</span>
</body></html>
